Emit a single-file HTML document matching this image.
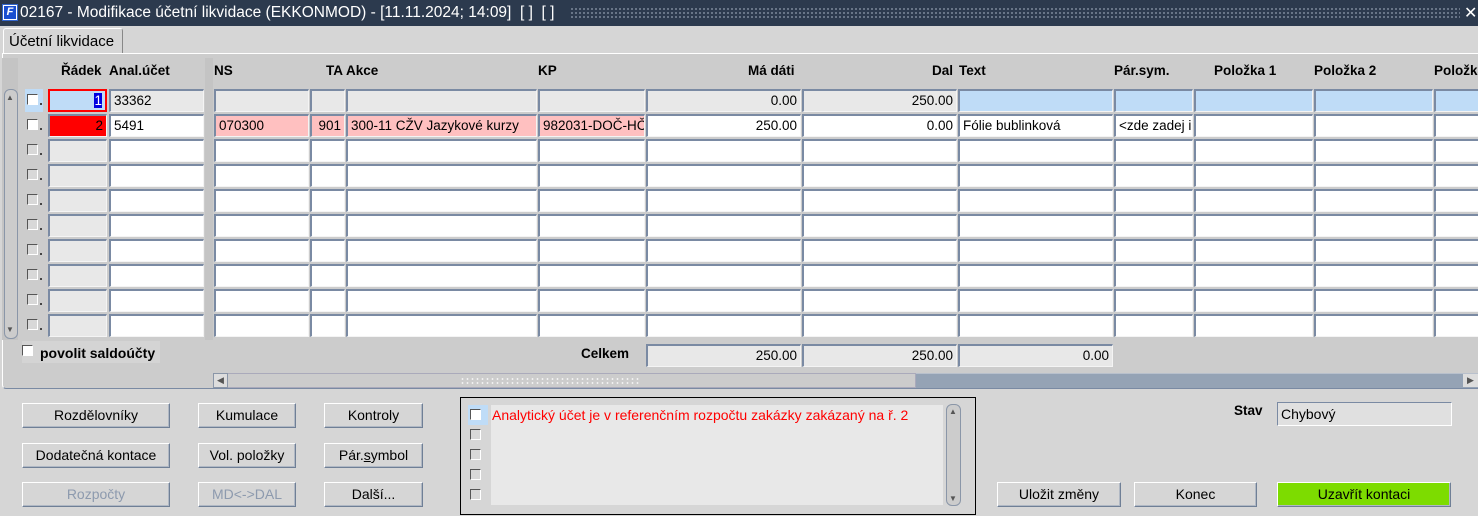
<!DOCTYPE html>
<html><head><meta charset="utf-8"><style>
*{box-sizing:border-box}
body{margin:0;width:1478px;height:516px;overflow:hidden;background:#d6d6d6;font-family:"Liberation Sans",Arial,sans-serif;font-size:13px;color:#000;position:relative}
.a{position:absolute}
#title{left:0;top:0;width:1478px;height:26px;background:#2c3a4e;color:#fff;font-size:15.5px;line-height:26px;padding-left:20px;white-space:nowrap}
#dots{left:570px;top:7px;width:890px;height:12px;background-image:radial-gradient(#6d7a8c 1px,transparent 1.2px);background-size:4px 4px}
#tab{left:3px;top:28px;width:120px;height:26px;background:#d6d6d6;border:1px solid #fff;border-bottom:none;border-right:1px solid #888;font-size:15px;line-height:26px;padding-left:5px;border-radius:3px 3px 0 0}
#panel{left:2px;top:53px;width:1480px;height:336px;background:#cccccc;border-top:1px solid #fff;border-left:1px solid #fff;border-bottom:1px solid #7a8aa3;border-radius:0 0 0 4px}
.h{position:absolute;top:63px;font-weight:bold;font-size:13.5px;white-space:nowrap}
.r{position:absolute;left:0;width:1478px;height:23px}
.f{position:absolute;top:0;height:23px;border:2px solid;border-color:#7a8aa3 #f4f4f4 #f4f4f4 #7a8aa3;border-width:2px 1px 1px 2px;background:#fff;line-height:19px;padding:0 3px;white-space:nowrap;overflow:hidden;font-size:13.5px}
.g{background:#e8e8e8}.b{background:#bfdcf7}.p{background:#ffc0c0}.rt{text-align:right}
.c1{left:48px;width:59px}.c2{left:109px;width:95px}.c3{left:214px;width:95px}.c4{left:310px;width:35px}.c5{left:346px;width:191px}.c6{left:538px;width:107px}.c7{left:646px;width:155px}.c8{left:802px;width:155px}.c9{left:958px;width:155px}.c10{left:1114px;width:79px}.c11{left:1194px;width:119px}.c12{left:1314px;width:119px}.c13{left:1434px;width:50px}
.cb{position:absolute;left:27px;top:5px;width:11px;height:11px;border:1px solid;border-color:#555 #fff #fff #555;background:#d8d8d8}
.cbw{background:#fff}
.dot{position:absolute;left:40px;top:14px;width:2px;height:2px;background:#444}
.btn{position:absolute;height:25px;border:1px solid;border-color:#fff #6f7f96 #6f7f96 #fff;background:#d6d6d6;text-align:center;line-height:23px;font-size:14px;box-shadow:inset -1px -1px 0 #b0b8c4}
.dis{color:#8d9aae}
</style></head><body>
<div id="title" class="a">02167 - Modifikace účetní likvidace (EKKONMOD) - [11.11.2024; 14:09]&nbsp; [ ]&nbsp; [ ]</div>
<div class="a" style="left:2px;top:4px;width:16px;height:17px;background:#fff;border:1px solid #3366cc"><div style="position:absolute;left:1px;top:1px;width:12px;height:13px;background:#1a4fd0;color:#fff;font-size:11px;line-height:13px;font-style:italic;font-weight:bold;text-align:center">F</div></div>
<div id="dots" class="a"></div>
<div class="a" style="left:1464px;top:3px;color:#fff;font-size:16px">✕</div>
<div id="tab" class="a">Účetní likvidace</div>
<div id="panel" class="a"></div>
<div class="a" style="left:2px;top:58px;width:16px;height:282px;background:#c4c4c4"></div>
<div class="a" style="left:205px;top:58px;width:8px;height:282px;background:#c4c4c4"></div>
<div class="a" style="left:4px;top:89px;width:14px;height:250px;border:1px solid #8a96a8;border-radius:6px;background:#cccccc"></div>
<div class="a" style="left:6px;top:93px;font-size:8px;color:#555">▲</div>
<div class="a" style="left:6px;top:325px;font-size:8px;color:#555">▼</div>

<div class="h" style="left:61px">Řádek</div><div class="h" style="left:109px">Anal.účet</div>
<div class="h" style="left:214px">NS</div><div class="h" style="left:326px">TA</div><div class="h" style="left:346px">Akce</div>
<div class="h" style="left:538px">KP</div><div class="h" style="left:748px">Má dáti</div><div class="h" style="left:932px">Dal</div>
<div class="h" style="left:959px">Text</div><div class="h" style="left:1114px">Pár.sym.</div><div class="h" style="left:1214px">Položka 1</div>
<div class="h" style="left:1314px">Položka 2</div><div class="h" style="left:1434px">Položka 3</div>

<div class="r" style="top:89px"><div class="a" style="left:25px;top:0;width:18px;height:23px;background:#bfdcf7"></div><div class="cb cbw"></div><div class="dot"></div>
<div class="f c1 b rt" style="border:2px solid #f00"><span style="background:#0000e0;color:#fff">1</span></div><div class="f c2 g">33362</div><div class="f c3 g"></div><div class="f c4 g"></div><div class="f c5 g"></div><div class="f c6 g"></div><div class="f c7 g rt">0.00</div><div class="f c8 g rt">250.00</div><div class="f c9 b"></div><div class="f c10 b"></div><div class="f c11 b"></div><div class="f c12 b"></div><div class="f c13 b"></div></div>
<div class="r" style="top:114px"><div class="cb cbw"></div><div class="dot"></div>
<div class="f c1 rt" style="background:#f00">2</div><div class="f c2">5491</div><div class="f c3 p">070300</div><div class="f c4 p rt">901</div><div class="f c5 p">300-11 CŽV Jazykové kurzy</div><div class="f c6 p">982031-DOČ-HČ</div><div class="f c7 rt">250.00</div><div class="f c8 rt">0.00</div><div class="f c9">Fólie bublinková</div><div class="f c10">&lt;zde zadej interní</div><div class="f c11"></div><div class="f c12"></div><div class="f c13"></div></div>
<div class="r" style="top:139px"><div class="cb"></div><div class="dot"></div><div class="f c1 g"></div><div class="f c2"></div><div class="f c3"></div><div class="f c4"></div><div class="f c5"></div><div class="f c6"></div><div class="f c7"></div><div class="f c8"></div><div class="f c9"></div><div class="f c10"></div><div class="f c11"></div><div class="f c12"></div><div class="f c13"></div></div>
<div class="r" style="top:164px"><div class="cb"></div><div class="dot"></div><div class="f c1 g"></div><div class="f c2"></div><div class="f c3"></div><div class="f c4"></div><div class="f c5"></div><div class="f c6"></div><div class="f c7"></div><div class="f c8"></div><div class="f c9"></div><div class="f c10"></div><div class="f c11"></div><div class="f c12"></div><div class="f c13"></div></div>
<div class="r" style="top:189px"><div class="cb"></div><div class="dot"></div><div class="f c1 g"></div><div class="f c2"></div><div class="f c3"></div><div class="f c4"></div><div class="f c5"></div><div class="f c6"></div><div class="f c7"></div><div class="f c8"></div><div class="f c9"></div><div class="f c10"></div><div class="f c11"></div><div class="f c12"></div><div class="f c13"></div></div>
<div class="r" style="top:214px"><div class="cb"></div><div class="dot"></div><div class="f c1 g"></div><div class="f c2"></div><div class="f c3"></div><div class="f c4"></div><div class="f c5"></div><div class="f c6"></div><div class="f c7"></div><div class="f c8"></div><div class="f c9"></div><div class="f c10"></div><div class="f c11"></div><div class="f c12"></div><div class="f c13"></div></div>
<div class="r" style="top:239px"><div class="cb"></div><div class="dot"></div><div class="f c1 g"></div><div class="f c2"></div><div class="f c3"></div><div class="f c4"></div><div class="f c5"></div><div class="f c6"></div><div class="f c7"></div><div class="f c8"></div><div class="f c9"></div><div class="f c10"></div><div class="f c11"></div><div class="f c12"></div><div class="f c13"></div></div>
<div class="r" style="top:264px"><div class="cb"></div><div class="dot"></div><div class="f c1 g"></div><div class="f c2"></div><div class="f c3"></div><div class="f c4"></div><div class="f c5"></div><div class="f c6"></div><div class="f c7"></div><div class="f c8"></div><div class="f c9"></div><div class="f c10"></div><div class="f c11"></div><div class="f c12"></div><div class="f c13"></div></div>
<div class="r" style="top:289px"><div class="cb"></div><div class="dot"></div><div class="f c1 g"></div><div class="f c2"></div><div class="f c3"></div><div class="f c4"></div><div class="f c5"></div><div class="f c6"></div><div class="f c7"></div><div class="f c8"></div><div class="f c9"></div><div class="f c10"></div><div class="f c11"></div><div class="f c12"></div><div class="f c13"></div></div>
<div class="r" style="top:314px"><div class="cb"></div><div class="dot"></div><div class="f c1 g"></div><div class="f c2"></div><div class="f c3"></div><div class="f c4"></div><div class="f c5"></div><div class="f c6"></div><div class="f c7"></div><div class="f c8"></div><div class="f c9"></div><div class="f c10"></div><div class="f c11"></div><div class="f c12"></div><div class="f c13"></div></div>

<div class="a" style="left:22px;top:341px;width:138px;height:22px;background:#d4d4d4"></div>
<div class="a" style="left:22px;top:345px;width:11px;height:11px;border:1px solid;border-color:#555 #fff #fff #555;background:#fff"></div>
<div class="a" style="left:40px;top:345px;font-weight:bold;font-size:14px">povolit saldoúčty</div>
<div class="a" style="left:581px;top:346px;font-weight:bold;font-size:13.5px">Celkem</div>
<div class="r" style="top:344px"><div class="f c7 g rt">250.00</div><div class="f c8 g rt">250.00</div><div class="f c9 g rt">0.00</div></div>

<div class="a" style="left:213px;top:373px;width:1265px;height:15px;background:#95a3b5;border-top:1px solid #b8c0cc"></div>
<div class="a" style="left:213px;top:373px;width:703px;height:15px;background:#cccccc;border:1px solid #aab"></div>
<div class="a" style="left:213px;top:373px;width:15px;height:15px;background:#ddd;border:1px solid #8a96a8;font-size:9px;line-height:13px;text-align:center;color:#555">◀</div>
<div class="a" style="left:460px;top:377px;width:180px;height:7px;background-image:radial-gradient(#f0f0f0 1px,transparent 1.2px);background-size:5px 4px"></div>
<div class="a" style="left:1463px;top:374px;width:15px;height:13px;background:#ddd;font-size:9px;line-height:13px;text-align:center;color:#555">▶</div>

<div class="btn" style="left:22px;top:403px;width:148px">Rozdělovníky</div>
<div class="btn" style="left:198px;top:403px;width:98px">Kumulace</div>
<div class="btn" style="left:324px;top:403px;width:99px">Kontroly</div>
<div class="btn" style="left:22px;top:443px;width:148px">Dodatečná kontace</div>
<div class="btn" style="left:198px;top:443px;width:98px">Vol. položky</div>
<div class="btn" style="left:324px;top:443px;width:99px">Pár.<u>s</u>ymbol</div>
<div class="btn dis" style="left:22px;top:482px;width:148px">Rozpočty</div>
<div class="btn dis" style="left:198px;top:482px;width:98px">MD&lt;-&gt;DAL</div>
<div class="btn" style="left:324px;top:482px;width:99px">Další...</div>

<div class="a" style="left:460px;top:397px;width:516px;height:118px;border:1px solid #000;background:#d6d6d6"></div>
<div class="a" style="left:491px;top:405px;width:452px;height:100px;background:#e8e8e8"></div>
<div class="a" style="left:468px;top:405px;width:20px;height:20px;background:#bfdcf7"></div>
<div class="cb cbw" style="left:470px;top:409px"></div>
<div class="cb" style="left:470px;top:429px"></div>
<div class="cb" style="left:470px;top:449px"></div>
<div class="cb" style="left:470px;top:469px"></div>
<div class="cb" style="left:470px;top:489px"></div>
<div class="a" style="left:492px;top:407px;color:#f00;font-size:14px">Analytický účet je v referenčním rozpočtu zakázky zakázaný na ř. 2</div>
<div class="a" style="left:946px;top:404px;width:15px;height:102px;border:1px solid #8a96a8;border-radius:6px;background:#cccccc"></div>
<div class="a" style="left:949px;top:407px;font-size:8px;color:#555">▲</div>
<div class="a" style="left:949px;top:494px;font-size:8px;color:#555">▼</div>

<div class="a" style="left:1234px;top:403px;font-weight:bold;font-size:13.5px">Stav</div>
<div class="a" style="left:1277px;top:402px;width:175px;height:24px;border:1px solid;border-color:#7a8aa3 #fff #fff #7a8aa3;background:#e0e0e0;line-height:22px;padding-left:3px;font-size:14px">Chybový</div>
<div class="btn" style="left:997px;top:482px;width:124px">Uložit změny</div>
<div class="btn" style="left:1134px;top:482px;width:123px">Konec</div>
<div class="btn" style="left:1277px;top:482px;width:174px;background:#7ddc00">Uzavřít kontaci</div>
</body></html>
